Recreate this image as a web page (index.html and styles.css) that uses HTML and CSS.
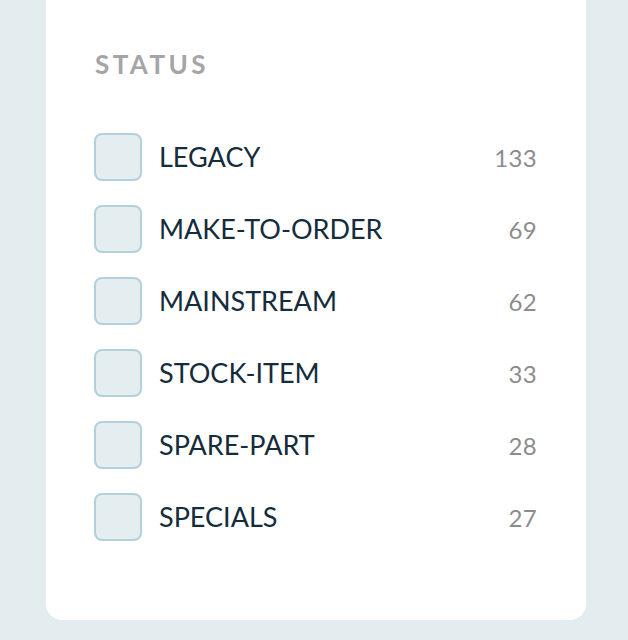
FILE: index.html
```html
<!DOCTYPE html>
<html>
<head>
<meta charset="utf-8">
<link rel="stylesheet" href="styles.css">
</head>
<body>
<div class="card">
  <h2 class="title">STATUS</h2>
  <ul class="list">
    <li class="row"><span class="box"></span><span class="label">LEGACY</span><span class="count">133</span></li>
    <li class="row"><span class="box"></span><span class="label">MAKE-TO-ORDER</span><span class="count">69</span></li>
    <li class="row"><span class="box"></span><span class="label">MAINSTREAM</span><span class="count">62</span></li>
    <li class="row"><span class="box"></span><span class="label">STOCK-ITEM</span><span class="count">33</span></li>
    <li class="row"><span class="box"></span><span class="label">SPARE-PART</span><span class="count">28</span></li>
    <li class="row"><span class="box"></span><span class="label">SPECIALS</span><span class="count">27</span></li>
  </ul>
</div>
</body>
</html>
```
FILE: styles.css
```css
html, body {
  margin: 0;
  padding: 0;
  background: #e3ecef;
}
body {
  font-family: Lato, Roboto, sans-serif;
  height: 640px;
  overflow: hidden;
}
.card {
  margin-left: 46px;
  width: 540px;
  box-sizing: border-box;
  height: 620px;
  background: #ffffff;
  border-radius: 0 0 16px 16px;
  padding: 48px 49px 0 48px;
}
.title {
  margin: 0 0 53px 1px;
  font-size: 26px;
  line-height: 32px;
  font-weight: 700;
  letter-spacing: 3.4px;
  color: #a5a5a5;
}
.list {
  list-style: none;
  margin: 0;
  padding: 0;
  display: flex;
  flex-direction: column;
  gap: 24px;
}
.row {
  display: flex;
  align-items: center;
  height: 48px;
}
.box {
  width: 48px;
  height: 48px;
  box-sizing: border-box;
  border: 2px solid #b3d0dd;
  border-radius: 8px;
  background: #e4edf0;
  flex: none;
}
.label {
  margin-left: 17px;
  padding-bottom: 2px;
  flex: 1;
  font-size: 27px;
  color: #142c3c;
}
.count {
  font-size: 24px;
  color: #8c8c8c;
  letter-spacing: 0.3px;
}
```
